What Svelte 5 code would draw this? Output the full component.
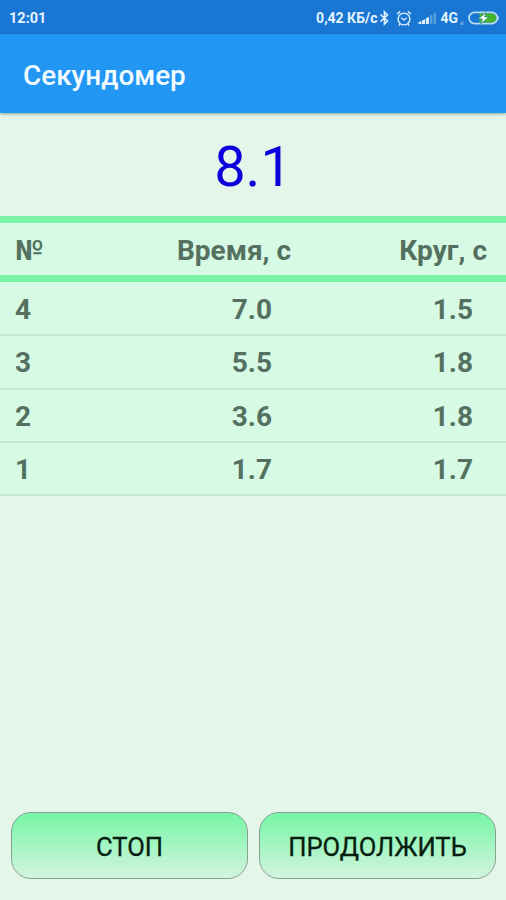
<script lang="ts">
  interface Lap {
    number: number;
    time: string;
    lap: string;
  }

  let elapsed = '8.1';

  let laps: Lap[] = [
    { number: 4, time: '7.0', lap: '1.5' },
    { number: 3, time: '5.5', lap: '1.8' },
    { number: 2, time: '3.6', lap: '1.8' },
    { number: 1, time: '1.7', lap: '1.7' }
  ];
</script>

<div class="screen">
  <div class="status-bar">
    <span class="clock">12:01</span>
    <span class="speed">0,42 КБ/с</span>
    <svg class="bluetooth" width="11" height="16" viewBox="0 0 11 16">
      <path d="M1.5 4.5 L8.5 11 L5.5 14 V2 L8.5 5 L1.5 11.5" />
    </svg>
    <svg class="alarm" width="16" height="17" viewBox="0 0 16 17">
      <circle cx="8" cy="9" r="5.9" />
      <path d="M5.2 7.8 L8 10 L10.6 8.2 M1 4 L4.2 1.4 M15 4 L11.8 1.4 M4 14 L2.8 15.5 M12 14 L13.2 15.5" />
    </svg>
    <svg class="signal" width="19" height="14" viewBox="0 0 19 14">
      <path d="M0.5 13 V11.2 L3.4 10 V13 Z M4 13 V9.6 L7 8.2 V13 Z M7.8 13 V7.6 L11 5.8 V13 Z" />
      <path class="weak" d="M12 13 V4.6 L14.4 3.4 V13 Z M15.6 13 V2.4 L18 1 V13 Z" />
    </svg>
    <span class="network">4G</span>
    <svg class="sub-signal" width="5" height="6" viewBox="0 0 5 6">
      <path d="M0 6 V4 L3.5 1.5 V6 Z" />
    </svg>
    <svg class="battery" width="32" height="14" viewBox="0 0 32 14">
      <path class="charge" d="M11.5 2.4 H23.5 A4.6 4.6 0 0 1 23.5 11.6 H11.5 Z" />
      <rect class="shell" x="1" y="1.4" width="28.4" height="11.2" rx="5.6" />
      <path class="cap" d="M30.4 4.6 Q31.8 7 30.4 9.4 Z" />
      <path class="bolt" d="M18.2 1.4 L10.2 8 H14.4 L12.6 12.8 L21 6 H16.6 Z" />
    </svg>
  </div>

  <header>
    <h1>Секундомер</h1>
  </header>

  <div class="display">{elapsed}</div>

  <div class="table">
    <div class="row head">
      <span>№</span>
      <span class="time">Время, с</span>
      <span class="lap">Круг, с</span>
    </div>
    <div class="laps">
      {#each laps as item}
        <div class="row">
          <span>{item.number}</span>
          <span class="time">{item.time}</span>
          <span class="lap">{item.lap}</span>
        </div>
      {/each}
    </div>
  </div>

  <div class="buttons">
    <button type="button">СТОП</button>
    <button type="button">ПРОДОЛЖИТЬ</button>
  </div>
</div>

<style>
  :global(body) {
    margin: 0;
  }

  .screen {
    display: flex;
    flex-direction: column;
    height: 900px;
    background: #e4f6ea;
    font-family: Roboto, "Noto Sans", sans-serif;
    overflow: hidden;
  }

  .status-bar {
    display: flex;
    align-items: center;
    box-sizing: border-box;
    flex: none;
    height: 34px;
    padding: 2px 6px 0 9px;
    background: #1976d2;
    color: #e4f3ff;
    font-size: 14.5px;
    font-weight: 700;
  }

  .clock {
    flex: 1;
  }

  .speed {
    font-size: 14px;
  }

  .network {
    margin-left: 3px;
    font-size: 14px;
  }

  svg {
    flex: none;
    fill: none;
    stroke: #dceeff;
    stroke-width: 1.4;
  }

  .bluetooth {
    margin-left: 2px;
    stroke-width: 1.7;
  }

  .alarm {
    margin-left: 6px;
  }

  .signal {
    margin-left: 6px;
    fill: #dceeff;
    stroke: none;
  }

  .weak {
    fill: #5b9fdf;
  }

  .sub-signal {
    margin: 8px 0 0 2px;
    fill: #5b9fdf;
    stroke: none;
  }

  .battery {
    margin-left: 3px;
  }

  .charge {
    fill: #45b62b;
    stroke: none;
  }

  .shell {
    stroke: #b9dcee;
    stroke-width: 1.8;
  }

  .cap {
    fill: #dceeff;
    stroke: none;
  }

  .bolt {
    fill: #ffffff;
    stroke: #2c8a7c;
    stroke-width: 0.8;
  }

  header {
    display: flex;
    align-items: center;
    flex: none;
    z-index: 1;
    height: 79px;
    padding-left: 23px;
    background: #2196f3;
    box-shadow: 0 1px 3px rgba(0, 0, 0, 0.35);
  }

  h1 {
    margin: 3px 0 0;
    color: #f2fbff;
    font-size: 27.9px;
    font-weight: 500;
  }

  .display {
    flex: none;
    height: 103px;
    color: #0b00dc;
    font-size: 56px;
    line-height: 109px;
    text-align: center;
  }

  .table {
    flex: none;
    background: #d7fae5;
    color: #54705f;
    font-size: 28px;
    font-weight: 700;
  }

  .row {
    display: grid;
    grid-template-columns: 85px 191px 1fr;
    align-items: center;
    box-sizing: border-box;
    height: 53.3px;
    padding: 2px 5px 0 15px;
    border-bottom: 2px solid #c9e6d6;
  }

  .row .time {
    padding-right: 19px;
    text-align: right;
  }

  .row .lap {
    padding-right: 28px;
    text-align: right;
  }

  .head {
    height: 66px;
    border-top: 7px solid #79f3a6;
    border-bottom: 7px solid #79f3a6;
  }

  .head .time {
    padding-right: 0;
  }

  .head .lap {
    padding-right: 14px;
  }

  .laps {
    padding-top: 1px;
  }

  .buttons {
    display: grid;
    grid-template-columns: 1fr 1fr;
    gap: 11px;
    margin-top: auto;
    padding: 0 10px 21px 11px;
  }

  button {
    height: 67px;
    padding: 3px 0 0;
    border: 1px solid #86a190;
    border-radius: 20px;
    background: linear-gradient(#76f5a5, #d2f5df);
    color: #071d10;
    font-family: inherit;
    font-size: 25.6px;
    font-weight: 400;
    -webkit-text-stroke: 0.3px #071d10;
  }
</style>
